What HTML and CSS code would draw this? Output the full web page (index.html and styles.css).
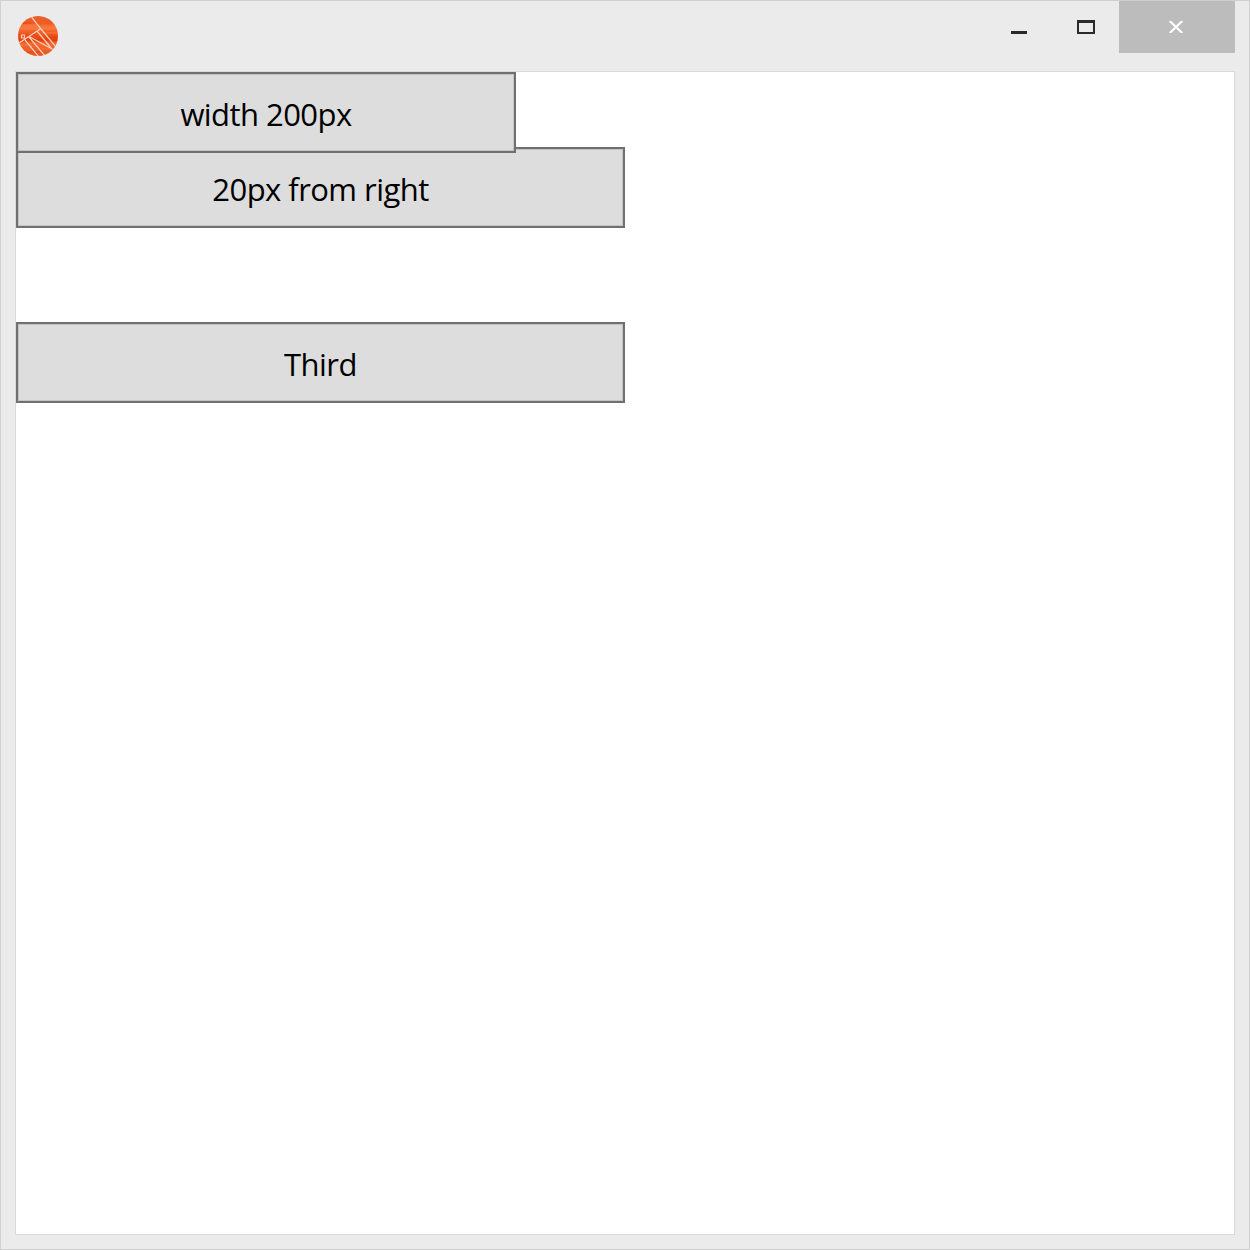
FILE: index.html
```html
<!DOCTYPE html>
<html lang="en">
<head>
<meta charset="utf-8">
<title>Window</title>
<link rel="stylesheet" href="styles.css">
</head>
<body>
<div class="window">
  <header class="titlebar">
    <svg class="app-icon" width="42" height="42" viewBox="0 0 42 42" aria-hidden="true">
      <defs>
        <clipPath id="disc"><circle cx="21" cy="21" r="20"/></clipPath>
        <linearGradient id="wood" x1="0" y1="0" x2="0" y2="1">
          <stop offset="0" stop-color="#e95e2b"/>
          <stop offset=".2" stop-color="#ee5c24"/>
          <stop offset=".29" stop-color="#fb7c42"/>
          <stop offset=".38" stop-color="#f4632a"/>
          <stop offset=".52" stop-color="#e94d17"/>
          <stop offset=".6" stop-color="#e4430f"/>
          <stop offset=".68" stop-color="#f36a31"/>
          <stop offset="1" stop-color="#e8521e"/>
        </linearGradient>
      </defs>
      <g clip-path="url(#disc)">
        <path fill="url(#wood)" d="M0 0h42v42H0z"/>
        <path stroke="#ff8550" stroke-width="1" opacity=".65" d="M5 10h17M2 14h36M25 18h16M3 30h12M25 34h12"/>
        <path stroke="#dc3d0d" stroke-width="1" opacity=".65" d="M4 8h10M2 20h16M25 22h16M2 25h39M10 37h13"/>
        <path fill="none" stroke="#ffd0bc" stroke-width="1.2" d="M13 0 24 14 39 32M24 13.5 2 28M20 16l15 18M12 21.5l24 13M12 22l16 19M8 25l14 17M4.5 20h3v3h-3z"/>
      </g>
    </svg>
    <div class="controls">
      <div class="control"><svg width="18" height="14" viewBox="0 0 18 14"><path fill="#2a2a2a" d="M1 11h16v3H1z"/></svg></div>
      <div class="control"><svg width="18" height="14" viewBox="0 0 18 14"><path fill="#2a2a2a" fill-rule="evenodd" d="M0 0h18v14H0zM2 3v9h14V3z"/></svg></div>
      <div class="control close"><svg width="14" height="12" viewBox="0 0 14 12"><path stroke="#fff" stroke-width="2.2" d="M.7 0 13.3 12M13.3 0 .7 12"/></svg></div>
    </div>
  </header>
  <main class="content">
    <div class="button first"><span class="label">width 200px</span></div>
    <div class="button second"><span class="label">20px from right</span></div>
    <div class="button third"><span class="label">Third</span></div>
  </main>
</div>
</body>
</html>
```
FILE: styles.css
```css
* { box-sizing: border-box; }
body { margin: 0; }
.window {
  display: flex;
  flex-direction: column;
  width: 1250px;
  height: 1250px;
  padding: 0 14px 14px;
  background: #ebebeb;
  border: 1px solid #d0d0d0;
}
.titlebar {
  display: flex;
  justify-content: space-between;
  height: 70px;
  flex: none;
}
.app-icon { margin: 14px 0 0 2px; }
.controls { display: flex; height: 52px; }
.control {
  display: flex;
  justify-content: center;
  width: 67px;
  padding-top: 19px;
}
.close { width: 116px; padding: 20px 2px 0 0; background: #bcbcbc; }
.content {
  flex: 1;
  background: #fff;
  border: 1px solid #d9d9d9;
}
.button {
  display: flex;
  align-items: center;
  justify-content: center;
  width: 609px;
  height: 81px;
  padding-top: 2px;
  background: #ddd;
  border: 2px solid #707070;
  box-shadow: inset 0 0 0 1px #c3c3c3;
}
.first { position: relative; z-index: 1; width: 500px; }
.second { margin-top: -6px; }
.third { margin-top: 94px; }
.label {
  font: 400 31px/42px "Segoe UI", "Open Sans", "Noto Sans", sans-serif;
  letter-spacing: -.55px;
  color: #000;
  white-space: nowrap;
}
```
